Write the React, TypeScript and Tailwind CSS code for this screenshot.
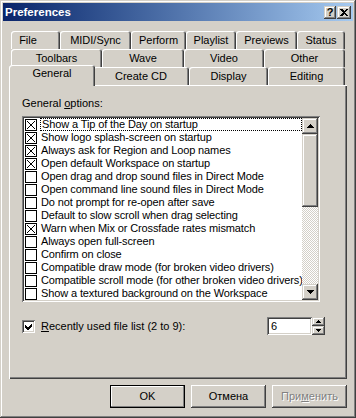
import React from "react";

const raisedBtn =
  "shadow-[inset_-1px_-1px_#404040,inset_1px_1px_#ffffff,inset_-2px_-2px_#808080,inset_2px_2px_#d4d0c8]";
const raisedScroll =
  "shadow-[inset_-1px_-1px_#404040,inset_1px_1px_#d4d0c8,inset_-2px_-2px_#808080,inset_2px_2px_#ffffff]";
const sunken =
  "shadow-[inset_1px_1px_#808080,inset_-1px_-1px_#ffffff,inset_2px_2px_#404040,inset_-2px_-2px_#d4d0c8]";
const tabEdge =
  "shadow-[inset_1px_1px_#ffffff,inset_-1px_0_#404040,inset_-2px_0_#808080] rounded-t-[3px]";

const row1 = [
  { label: "File", w: "w-[49px] pr-[15px]" },
  { label: "MIDI/Sync", w: "w-[71px]" },
  { label: "Perform", w: "w-[55px]" },
  { label: "Playlist", w: "w-[50px]" },
  { label: "Previews", w: "w-[61px]" },
  { label: "Status", w: "w-[48px]" },
];
const row2 = [
  { label: "Toolbars", w: "w-[91px]" },
  { label: "Wave", w: "w-[82px]" },
  { label: "Video", w: "w-[80px]" },
  { label: "Other", w: "w-[81px]" },
];
const row3 = [
  { label: "Create CD", w: "w-[96px]" },
  { label: "Display", w: "w-[79px]" },
  { label: "Editing", w: "w-[77px]" },
];

const options = [
  { text: "Show a Tip of the Day on startup", on: true },
  { text: "Show logo splash-screen on startup", on: true },
  { text: "Always ask for Region and Loop names", on: true },
  { text: "Open default Workspace on startup", on: true },
  { text: "Open drag and drop sound files in Direct Mode", on: false },
  { text: "Open command line sound files in Direct Mode", on: false },
  { text: "Do not prompt for re-open after save", on: false },
  { text: "Default to slow scroll when drag selecting", on: false },
  { text: "Warn when Mix or Crossfade rates mismatch", on: true },
  { text: "Always open full-screen", on: false },
  { text: "Confirm on close", on: false },
  { text: "Compatible draw mode (for broken video drivers)", on: false },
  { text: "Compatible scroll mode (for other broken video drivers)", on: false },
  { text: "Show a textured background on the Workspace", on: false },
];

function Arrow({ down = false }: { down?: boolean }) {
  return (
    <svg width="7" height="4" viewBox="0 0 7 4" shapeRendering="crispEdges" className={down ? "rotate-180" : ""}>
      <rect x="3" y="0" width="1" height="1" fill="#000" />
      <rect x="2" y="1" width="3" height="1" fill="#000" />
      <rect x="1" y="2" width="5" height="1" fill="#000" />
      <rect x="0" y="3" width="7" height="1" fill="#000" />
    </svg>
  );
}

function Tab({ label, w }: { label: string; w: string }) {
  return (
    <div className={`${w} h-[18px] shrink-0 flex items-center justify-center ${tabEdge}`}>
      {label}
    </div>
  );
}

function CheckX() {
  return (
    <div className="w-[12px] h-[12px] border border-black bg-white shrink-0">
      <svg width="10" height="10" viewBox="0 0 10 10" shapeRendering="crispEdges">
        <path d="M1 1L9 9M9 1L1 9" stroke="#000" strokeWidth="1" />
      </svg>
    </div>
  );
}

function CheckEmpty() {
  return <div className="w-[12px] h-[12px] border border-black bg-white shrink-0" />;
}

export default function App() {
  return (
    <div className="w-[356px] h-[418px] bg-[#d4d0c8] p-[3px] flex flex-col font-['Liberation_Sans',Arial,sans-serif] text-[11px] leading-[13px] text-black select-none shadow-[inset_-1px_-1px_#404040,inset_1px_1px_#d4d0c8,inset_-2px_-2px_#808080,inset_2px_2px_#ffffff]">
      {/* title bar */}
      <div className="h-[18px] flex items-center bg-linear-to-r from-[#0a246a] to-[#a6caf0] pl-[2px] pr-[2px]">
        <span className="flex-1 text-white font-bold text-[11.5px]">Preferences</span>
        <div className={`w-[12px] h-[13px] mr-[1px] flex items-center justify-center bg-[#d4d0c8] font-bold text-[11px] ${raisedScroll}`}>
          ?
        </div>
        <div className={`w-[14px] h-[13px] flex items-center justify-center bg-[#d4d0c8] ${raisedScroll}`}>
          <svg width="8" height="7" viewBox="0 0 8 7" shapeRendering="crispEdges">
            <path d="M0 0h2l2 2 2-2h2L5 3.5 8 7H6L4 5 2 7H0l3-3.5z" fill="#000" />
          </svg>
        </div>
      </div>

      {/* tabs */}
      <div className="mt-[10px] ml-[8px] w-[334px] flex flex-col">
        <div className="flex">
          {row1.map((t) => (
            <Tab key={t.label} {...t} />
          ))}
        </div>
        <div className="flex">
          {row2.map((t) => (
            <Tab key={t.label} {...t} />
          ))}
        </div>
        <div className="flex h-[18px]">
          <div className={`relative z-10 -ml-[2px] -mr-[2px] -mt-[2px] w-[86px] h-[21px] shrink-0 bg-[#d4d0c8] flex items-start justify-center pt-[2px] ${tabEdge}`}>
            General
          </div>
          {row3.map((t) => (
            <Tab key={t.label} {...t} />
          ))}
        </div>
      </div>

      {/* panel */}
      <div className="ml-[6px] w-[338px] h-[294px] flex flex-col pl-[13px] pt-[12px] shadow-[inset_1px_1px_#ffffff,inset_-1px_-1px_#404040,inset_-2px_-2px_#808080]">
        <div>
          General <span className="underline">o</span>ptions:
        </div>

        <div className={`mt-[6px] w-[298px] h-[186px] bg-white p-[2px] flex ${sunken}`}>
          <div className="flex-1 flex flex-col overflow-hidden tracking-[-0.12px]">
            {options.map((o, i) => (
              <div key={o.text} className="h-[13px] flex items-center shrink-0">
                <div className="ml-[1px]">{o.on ? <CheckX /> : <CheckEmpty />}</div>
                <div
                  className={`ml-[3px] flex-1 h-[13px] pl-[1px] whitespace-nowrap ${
                    i === 0 ? "border border-dotted border-black leading-[11px]" : ""
                  }`}
                >
                  {o.text}
                </div>
              </div>
            ))}
          </div>
          <div className="w-[16px] flex flex-col">
            <div className={`h-[16px] bg-[#d4d0c8] flex items-center justify-center ${raisedScroll}`}>
              <Arrow />
            </div>
            <div className="flex-1 flex flex-col bg-[repeating-conic-gradient(#ffffff_0_25%,#d4d0c8_0_50%)] bg-[length:2px_2px]">
              <div className={`h-[73px] bg-[#d4d0c8] ${raisedScroll}`} />
            </div>
            <div className={`h-[16px] bg-[#d4d0c8] flex items-center justify-center ${raisedScroll}`}>
              <Arrow down />
            </div>
          </div>
        </div>

        <div className="mt-[15px] w-[303px] h-[18px] flex items-center">
          <div className={`w-[13px] h-[13px] bg-white flex items-center justify-center ${sunken}`}>
            <svg width="7" height="7" viewBox="0 0 7 7" shapeRendering="crispEdges">
              <path d="M0 2v3l2 2h1l4-4V0L2.5 4.5z" fill="#000" />
            </svg>
          </div>
          <div className="ml-[6px]">
            <span className="underline">R</span>ecently used file list (2 to 9):
          </div>
          <div className={`ml-auto w-[45px] h-[18px] bg-white pl-[4px] flex items-center ${sunken}`}>6</div>
          <div className="w-[13px] h-[18px] flex flex-col">
            <div className={`h-[9px] bg-[#d4d0c8] flex items-center justify-center ${raisedScroll}`}>
              <svg width="5" height="3" viewBox="0 0 5 3" shapeRendering="crispEdges">
                <path d="M2 0h1v1h1v1h1v1H0V2h1V1h1z" fill="#000" />
              </svg>
            </div>
            <div className={`h-[9px] bg-[#d4d0c8] flex items-center justify-center ${raisedScroll}`}>
              <svg width="5" height="3" viewBox="0 0 5 3" shapeRendering="crispEdges">
                <path d="M0 0h5v1H4v1H3v1H2V2H1V1H0z" fill="#000" />
              </svg>
            </div>
          </div>
        </div>
      </div>

      {/* buttons */}
      <div className="mt-[6px] mr-[6px] flex justify-end gap-[6px]">
        <div className="w-[75px] h-[23px] flex items-center justify-center shadow-[inset_0_0_0_1px_#000000,inset_-2px_-2px_#808080,inset_2px_2px_#ffffff]">
          OK
        </div>
        <div className={`w-[75px] h-[23px] flex items-center justify-center ${raisedBtn}`}>Отмена</div>
        <div className={`w-[75px] h-[23px] flex items-center justify-center text-[#808080] [text-shadow:1px_1px_0_#ffffff] ${raisedBtn}`}>
          При<span className="underline">м</span>енить
        </div>
      </div>
    </div>
  );
}
